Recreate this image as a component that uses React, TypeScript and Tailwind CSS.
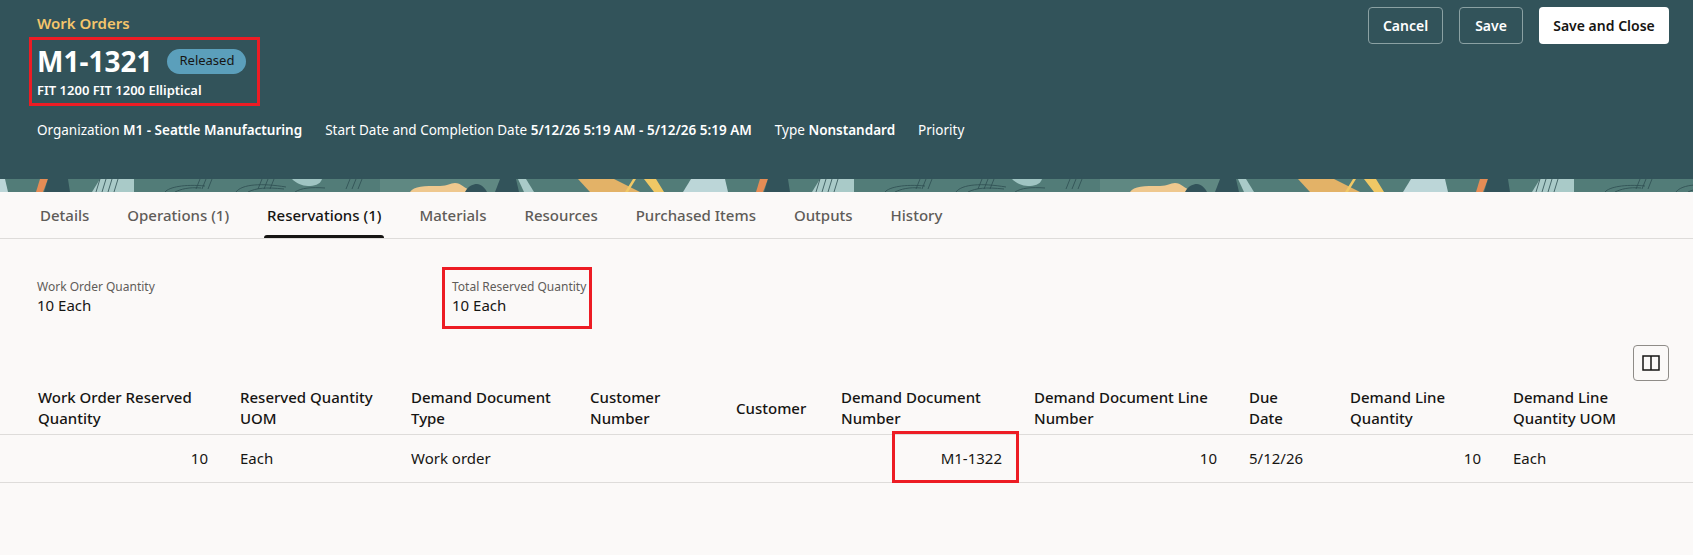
const font = "font-['Noto_Sans','Open_Sans',sans-serif]";

const columns = [
  { title: ["Work Order Reserved", "Quantity"], value: "10", right: true, width: "w-[224px]", first: true },
  { title: ["Reserved Quantity", "UOM"], value: "Each", width: "w-[171px]" },
  { title: ["Demand Document", "Type"], value: "Work order", width: "w-[179px]" },
  { title: ["Customer", "Number"], value: "", width: "w-[146px]" },
  { title: ["Customer"], value: "", width: "w-[105px]" },
  { title: ["Demand Document", "Number"], value: "M1-1322", right: true, width: "w-[193px]", mark: true },
  { title: ["Demand Document Line", "Number"], value: "10", right: true, width: "w-[215px]" },
  { title: ["Due", "Date"], value: "5/12/26", width: "w-[101px]" },
  { title: ["Demand Line", "Quantity"], value: "10", right: true, width: "w-[163px]" },
  { title: ["Demand Line", "Quantity UOM"], value: "Each", width: "" },
];

const tabs = ["Details", "Operations (1)", "Reservations (1)", "Materials", "Resources", "Purchased Items", "Outputs", "History"];

function Banner() {
  return (
    <svg className="block w-full h-[13px]" aria-hidden="true">
      <defs>
        <pattern id="tile" width="720" height="13" patternUnits="userSpaceOnUse">
          <rect width="720" height="13" fill="#527c78" />
          <rect x="380" width="130" height="13" fill="#5f8882" />
          <path d="M0 0h5l3 13H0z" fill="#bcd6d8" />
          <path d="M40 0h8l-5 13h-7z" fill="#e58c55" />
          <path d="M48 0h20l2 13H44z" fill="#32535a" />
          <path d="M92 13l8-13h34v13z" fill="#a9cac8" />
          <path d="M410 13c4-6 14-6 30-6 8 0 10-3 15-3 6 0 8 5 20 9z" fill="#efc88e" />
          <path d="M465 13c3-6 8-8 12-8s8 4 10 8z" fill="#32535a" />
          <path d="M500 0h16l3 13h-24z" fill="#32535a" />
          <path d="M518 0h8l8 13h-10z" fill="#a9cac8" />
          <path d="M578 0h36l26 13h-50z" fill="#e3b267" />
          <path d="M625 13l8-13h3l-8 13zM644 0h12l8 13h-10z" fill="#f0c865" />
          <path d="M683 13l8-13h36l3 13z" fill="#bcd6d8" />
          <g fill="none" stroke="#2c4c50" strokeWidth="0.8">
            <path d="M165 13c4-5 20-8 40-6M175 13c6-3 14-5 26-4M236 13c6-8 26-9 50-5M248 13c8-4 18-5 36-3M295 13c6-4 16-5 30-4" />
            <path d="M100 0l-4 13M106 0l-4 13M112 0l-4 13M118 0l-4 13M200 0l-4 10M206 0l-4 10M212 0l-4 10M262 0l-4 10M268 0l-4 10M274 0l-4 10M350 0l-4 10M356 0l-4 10M362 0l-4 10" />
          </g>
          <path d="M292 0h30c-2 6-8 7-14 7s-12-3-16-7z" fill="#9fc4c2" />
        </pattern>
      </defs>
      <rect width="100%" height="13" fill="url(#tile)" />
    </svg>
  );
}

function Header() {
  return (
    <div className="bg-[#32535a] h-[179px] pl-[37px] pr-6 relative">
      <div className="flex justify-between">
        <div className="pt-[13px] text-[15px] leading-[20px] font-semibold text-[#f4c56b]">Work Orders</div>
        <div className="flex gap-4 pt-[7px]">
          <button className="h-[37px] w-[75px] rounded-[4px] border border-[#8ba1a3] text-white text-[14px] font-semibold">Cancel</button>
          <button className="h-[37px] w-[64px] rounded-[4px] border border-[#8ba1a3] text-white text-[14px] font-semibold">Save</button>
          <button className="h-[37px] w-[130px] rounded-[4px] bg-white text-[#161513] text-[14px] font-semibold">Save and Close</button>
        </div>
      </div>
      <div className="relative w-fit">
        <div className="absolute left-[-8px] right-[-14px] top-[-6px] bottom-[-7px] border-[3px] border-[#ed1c24]" />
        <div className="flex items-center mt-[-1px]">
          <h1 className="text-[28px] leading-[36px] font-bold text-white">M1-1321</h1>
          <span className="ml-[15px] h-[25px] w-[79px] flex items-center justify-center rounded-full bg-[#5b9fbb] text-[#161513] text-[13px]">Released</span>
        </div>
        <div className="text-[13px] leading-[18px] font-semibold text-white mt-[2px]">FIT 1200 FIT 1200 Elliptical</div>
      </div>
      <div className="flex gap-[23px] text-[13.5px] text-white mt-[21px]">
        <span>Organization <b className="font-semibold">M1 - Seattle Manufacturing</b></span>
        <span>Start Date and Completion Date <b className="font-semibold">5/12/26 5:19 AM - 5/12/26 5:19 AM</b></span>
        <span>Type <b className="font-semibold">Nonstandard</b></span>
        <span>Priority</span>
      </div>
    </div>
  );
}

export default function App() {
  return (
    <div className={`${font} bg-[#fbf9f8] h-[555px] overflow-hidden text-[#161513]`}>
      <Header />
      <Banner />
      <div className="flex gap-[38px] pl-[40px] h-[47px] border-b border-[#dedcda] text-[15px] font-medium text-[#5f5c58]">
        {tabs.map((tab) => (
          <div key={tab} className={tab === "Reservations (1)" ? "relative flex items-center text-[#161513]" : "flex items-center"}>
            {tab}
            {tab === "Reservations (1)" && <div className="absolute left-[-3px] right-[-3px] bottom-0 h-[3px] rounded-t-sm bg-[#161513]" />}
          </div>
        ))}
      </div>
      <div className="flex pl-[37px] pt-[40px]">
        <div className="w-[415px]">
          <div className="text-[12px] leading-[16px] text-[#5f5c58]">Work Order Quantity</div>
          <div className="text-[15px] leading-[20px]">10 Each</div>
        </div>
        <div className="relative">
          <div className="absolute left-[-10px] right-[-6px] top-[-12px] bottom-[-14px] border-[3px] border-[#ed1c24]" />
          <div className="text-[12px] leading-[16px] text-[#5f5c58]">Total Reserved Quantity</div>
          <div className="text-[15px] leading-[20px]">10 Each</div>
        </div>
      </div>
      <div className="flex justify-end pr-6 mt-[30px]">
        <button className="w-[36px] h-[36px] rounded-[4px] border border-[#8f8c88] flex items-center justify-center bg-transparent">
          <svg width="18" height="16" viewBox="0 0 18 16" fill="none" stroke="#161513" strokeWidth="1.5">
            <rect x="1" y="1" width="16" height="14" />
            <path d="M9 1v14" />
          </svg>
        </button>
      </div>
      <table className="w-full table-fixed border-collapse text-[15px] mt-[6px]">
        <thead>
          <tr className="border-b border-[#dedcda]">
            {columns.map((col, i) => (
              <th key={i} className={`${col.width} ${col.first ? "pl-[38px]" : ""} pr-4 pl-4 pb-[5px] text-left align-middle font-medium leading-[21px]`}>
                {col.title.map((line) => (
                  <div key={line} className="whitespace-nowrap">{line}</div>
                ))}
              </th>
            ))}
          </tr>
        </thead>
        <tbody>
          <tr className="border-b border-[#dedcda] h-[48px]">
            {columns.map((col, i) => (
              <td key={i} className={`px-4 ${col.right ? "text-right" : "text-left"} ${col.mark ? "relative" : ""}`}>
                {col.value}
                {col.mark && <div className="absolute left-[67px] right-[-1px] top-[-4px] bottom-[-1px] border-[3px] border-[#ed1c24]" />}
              </td>
            ))}
          </tr>
        </tbody>
      </table>
    </div>
  );
}
